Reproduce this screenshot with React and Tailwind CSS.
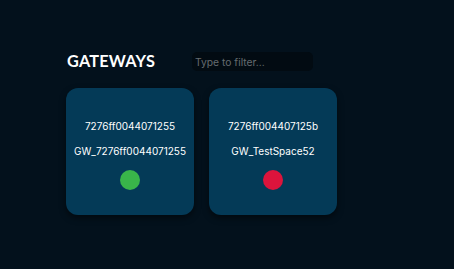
export default function App() {
  const gateways = [
    { id: "7276ff0044071255", name: "GW_7276ff0044071255", online: true },
    { id: "7276ff004407125b", name: "GW_TestSpace52", online: false },
  ];
  return (
    <div className="w-[454px] h-[269px] bg-[#03111c] overflow-hidden pl-[66px] pt-[52px]" style={{ fontFamily: '"Open Sans", sans-serif' }}>
      <div className="flex items-center h-[19px]">
        <h1 className="w-[126px] pl-[1px] text-[16.3px] font-bold text-white tracking-[0.2px] leading-none" style={{ fontFamily: 'Lato, sans-serif' }}>GATEWAYS</h1>
        <input
          placeholder="Type to filter..."
          className="w-[121px] h-[19px] rounded-[5px] bg-[#020b12] px-[3px] text-[10.3px] text-white placeholder:text-[#656b70] outline-none"
          style={{ fontFamily: '"Inter", sans-serif' }}
        />
      </div>
      <div className="flex gap-[15px] mt-[17px]">
        {gateways.map((g) => (
          <div key={g.id} className="w-[128px] h-[127px] rounded-[12px] bg-[#043a57] shadow-[0_3px_6px_rgba(0,0,0,0.5)] flex flex-col items-center pt-[31px] text-white text-[10px]" style={{ fontFamily: '"Inter", sans-serif' }}>
            <div className="leading-[14px]">{g.id}</div>
            <div className="leading-[14px] mt-[11px]">{g.name}</div>
            <div className={`mt-[12px] w-[20px] h-[20px] rounded-full ${g.online ? "bg-[#39b54a]" : "bg-[#dc143c]"}`} />
          </div>
        ))}
      </div>
    </div>
  );
}
